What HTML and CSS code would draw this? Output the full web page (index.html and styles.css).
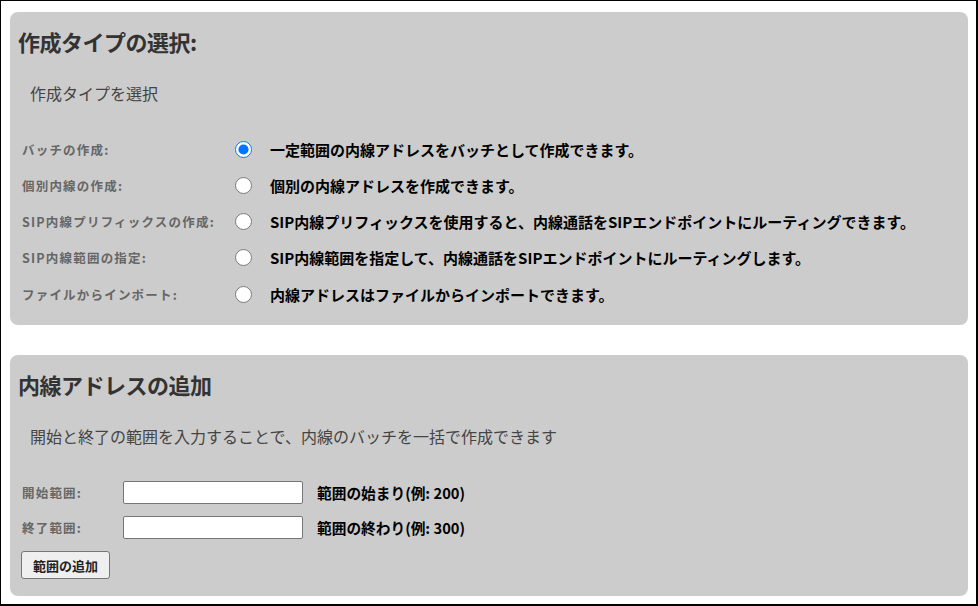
FILE: index.html
```html
<!DOCTYPE html>
<html lang="ja">
<head>
    <meta charset="UTF-8">
    <meta name="viewport" content="width=device-width, initial-scale=1.0">
    <title>内線アドレスの作成</title>
    <link rel="stylesheet" href="styles.css">
</head>
<body>
    <div class="page">
        <div class="card">
            <h2>作成タイプの選択:</h2>
            <p class="desc">作成タイプを選択</p>

            <div class="option-list">
                <label class="option-row">
                    <span class="option-name">バッチの作成:</span>
                    <input type="radio" name="create_type" value="batch" checked>
                    <span class="option-text">一定範囲の内線アドレスをバッチとして作成できます。</span>
                </label>
                <label class="option-row">
                    <span class="option-name">個別内線の作成:</span>
                    <input type="radio" name="create_type" value="single">
                    <span class="option-text">個別の内線アドレスを作成できます。</span>
                </label>
                <label class="option-row">
                    <span class="option-name">SIP内線プリフィックスの作成:</span>
                    <input type="radio" name="create_type" value="sip_prefix">
                    <span class="option-text">SIP内線プリフィックスを使用すると、内線通話をSIPエンドポイントにルーティングできます。</span>
                </label>
                <label class="option-row">
                    <span class="option-name">SIP内線範囲の指定:</span>
                    <input type="radio" name="create_type" value="sip_range">
                    <span class="option-text">SIP内線範囲を指定して、内線通話をSIPエンドポイントにルーティングします。</span>
                </label>
                <label class="option-row">
                    <span class="option-name">ファイルからインポート:</span>
                    <input type="radio" name="create_type" value="import">
                    <span class="option-text">内線アドレスはファイルからインポートできます。</span>
                </label>
            </div>
        </div>

        <div class="card">
            <h2>内線アドレスの追加</h2>
            <p class="desc">開始と終了の範囲を入力することで、内線のバッチを一括で作成できます</p>

            <form class="range-form" onsubmit="return false;">
                <div class="range-row">
                    <label for="range_start">開始範囲:</label>
                    <input type="text" id="range_start" name="range_start">
                    <span class="hint">範囲の始まり(例: 200)</span>
                </div>
                <div class="range-row">
                    <label for="range_end">終了範囲:</label>
                    <input type="text" id="range_end" name="range_end">
                    <span class="hint">範囲の終わり(例: 300)</span>
                </div>
                <button type="submit" class="btn">範囲の追加</button>
            </form>
        </div>
    </div>
</body>
</html>
```

FILE: styles.css
```css
:root {
    --card-background: #cccccc;
    --title-color: #333333;
    --desc-color: #444444;
    --label-color: #666666;
    --text-color: #000000;
}

* {
    margin: 0;
    padding: 0;
    box-sizing: border-box;
}

html, body {
    height: 100%;
}

body {
    font-family: "Noto Sans CJK JP", "Liberation Sans", sans-serif;
    background: #ffffff;
    border: 1px solid #000;
    border-right-width: 2px;
    border-bottom-width: 2px;
}

.page {
    padding: 11px 8px 0 9px;
}

.card {
    background: var(--card-background);
    border-radius: 8px;
    padding: 14px 8px 13px 8px;
    margin-bottom: 30px;
}

.card h2 {
    font-size: 22px;
    line-height: 30px;
    font-weight: 700;
    color: var(--title-color);
    letter-spacing: -0.5px;
}

.desc {
    font-size: 16px;
    line-height: 24px;
    color: var(--desc-color);
    margin: 25px 0 0 12px;
}

.option-list {
    margin-top: 26px;
}

.option-row {
    display: flex;
    align-items: center;
    height: 36.25px;
}

.option-name {
    width: 217px;
    padding-left: 4px;
    font-size: 12.5px;
    font-weight: 700;
    letter-spacing: 1.2px;
    color: var(--label-color);
}

.option-row input[type="radio"] {
    width: 17px;
    height: 17px;
    margin: 0 18px 0 0;
}

.option-text {
    font-size: 15px;
    font-weight: 700;
    color: var(--text-color);
    white-space: nowrap;
}

.range-form {
    margin: 33px 0 4px;
}

.range-row {
    display: flex;
    align-items: center;
    margin-bottom: 12px;
}

.range-row label {
    width: 105px;
    padding-left: 4px;
    font-size: 12.5px;
    font-weight: 700;
    letter-spacing: 1.2px;
    color: var(--label-color);
}

.range-row input {
    width: 180px;
    height: 23px;
    border: 1px solid #767676;
    border-radius: 2px;
    background: #fff;
    font-size: 13px;
    padding: 0 4px;
}

.hint {
    margin-left: 14px;
    font-size: 14.7px;
    font-weight: 700;
    color: var(--text-color);
}

.btn {
    margin-left: 3px;
    height: 28px;
    padding: 0 11px;
    font-family: inherit;
    font-size: 13px;
    font-weight: 700;
    color: #222;
    background: #efefef;
    border: 1px solid #767676;
    border-radius: 3px;
    cursor: pointer;
}
```
